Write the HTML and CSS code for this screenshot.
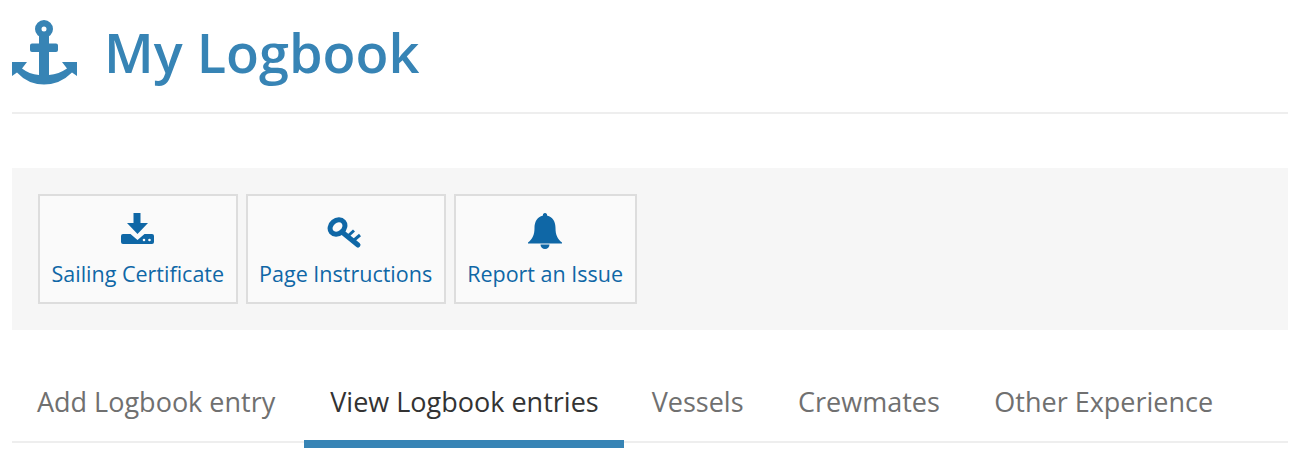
FILE: index.html
```html
<!DOCTYPE html>
<html lang="en">
<head>
    <meta charset="UTF-8">
    <meta name="viewport" content="width=device-width, initial-scale=1.0">
    <title>My Logbook</title>
    <link rel="stylesheet" href="styles.css">
</head>
<body>
    <div class="page">
        <div class="page-header">
            <svg class="anchor-icon" viewBox="0 0 65 65" width="65" height="65">
                <path fill-rule="evenodd" d="M32 0a9 9 0 1 1 0 18a9 9 0 1 1 0-18zM32 6.500a2.500 2.500 0 1 0 0 5a2.500 2.500 0 1 0 0-5z"/>
                <path d="M0 42H15L10 48.500Q17 54 27 55V32H20a2 2 0 0 1-2-2V25.500a2 2 0 0 1 2-2H27V16H37V23.500H44a2 2 0 0 1 2 2V30a2 2 0 0 1-2 2H37V55Q47 54 55 48.500L50 42H65V56L60 52.500Q48 64.500 32 64.500Q16 64.500 5 52.500L0 56Z"/>
            </svg>
            <h1>My Logbook</h1>
        </div>

        <div class="toolbar">
            <a class="tool-btn" href="#">
                <svg class="tool-icon" viewBox="0 0 33 36" width="33" height="36">
                    <path d="M12.500 0H19.500V10H27L16.500 21L6 10H12.500Z"/>
                    <path fill-rule="evenodd" d="M2 21H9.500L16.500 27L23.500 21H31a2 2 0 0 1 2 2V29a2 2 0 0 1-2 2H2a2 2 0 0 1-2-2V23a2 2 0 0 1 2-2zM23 25.700a1.300 1.300 0 1 0 0 2.600a1.300 1.300 0 1 0 0-2.600zM28.500 25.700a1.300 1.300 0 1 0 0 2.600a1.300 1.300 0 1 0 0-2.600z"/>
                </svg>
                <span>Sailing Certificate</span>
            </a>
            <a class="tool-btn" href="#">
                <svg class="tool-icon key-icon" viewBox="0 -4 35 36" width="35" height="36">
                    <g fill="none" stroke="currentColor" stroke-width="5">
                        <ellipse cx="10.500" cy="10" rx="8" ry="6.500" transform="rotate(-40 10.500 10)"/>
                        <path d="M15 15L31 28" stroke-linecap="round"/>
                    </g>
                    <g fill="none" stroke="currentColor" stroke-width="3">
                        <path d="M21 19L27 13.500"/>
                        <path d="M26 24L33 18"/>
                    </g>
                </svg>
                <span>Page Instructions</span>
            </a>
            <a class="tool-btn" href="#">
                <svg class="tool-icon" viewBox="0 0 34 36" width="34" height="36">
                    <path d="M17 0a2 2 0 0 1 2 2.500C25 4 27.500 9 27.500 15C27.500 22 29.500 26 34 29.500V30.500H0V29.500C4.500 26 6.500 22 6.500 15C6.500 9 9 4 15 2.500A2 2 0 0 1 17 0Z"/>
                    <path d="M12.500 31.500H21.500A4.500 4.500 0 0 1 12.500 31.500Z"/>
                </svg>
                <span>Report an Issue</span>
            </a>
        </div>

        <div class="tabs">
            <a class="tab first" href="#">Add Logbook entry</a>
            <a class="tab active" href="#">View Logbook entries</a>
            <a class="tab" href="#">Vessels</a>
            <a class="tab" href="#">Crewmates</a>
            <a class="tab" href="#">Other Experience</a>
        </div>
    </div>
</body>
</html>
```

FILE: styles.css
```css
body {
    font-family: "Open Sans", Arial, sans-serif;
    margin: 0;
    padding: 0;
    background-color: white;
}
.page {
    padding: 20px 2px 34px 12px;
}
.page-header {
    display: flex;
    align-items: flex-start;
    gap: 27px;
    height: 92px;
    border-bottom: 2px solid #eee;
    color: #3784b5;
}
.anchor-icon {
    fill: currentColor;
    flex: none;
}
.page-header h1 {
    margin: -8px 0 0 0;
    font-size: 54px;
    line-height: 80px;
    font-weight: 600;
}
.toolbar {
    display: flex;
    gap: 8px;
    margin-top: 54px;
    padding: 26px;
    background-color: #f6f6f6;
}
.tool-btn {
    display: flex;
    flex-direction: column;
    align-items: center;
    box-sizing: border-box;
    height: 110px;
    padding: 17px 11.5px 0;
    background-color: #fafafa;
    border: 2px solid #ddd;
    color: #0f67a6;
    font-size: 21.5px;
    text-decoration: none;
}
.tool-icon {
    fill: currentColor;
    flex: none;
}
.key-icon {
    margin-right: 3px;
}
.tool-btn span {
    margin-top: 10px;
    line-height: 30px;
}
.tabs {
    display: flex;
    margin-top: 40px;
    height: 71px;
    border-bottom: 2px solid #eee;
}
.tab {
    position: relative;
    padding: 14px 27px 0 27.5px;
    color: #707070;
    font-size: 27px;
    line-height: 36px;
    text-decoration: none;
}
.tab.first {
    padding-left: 25px;
    padding-right: 29px;
}
.tab.active {
    padding-left: 26px;
    padding-right: 25.5px;
    color: #333;
}
.tab.active::after {
    content: "";
    position: absolute;
    left: 0;
    right: 0;
    bottom: -7px;
    height: 8px;
    background-color: #3784b5;
}
```
